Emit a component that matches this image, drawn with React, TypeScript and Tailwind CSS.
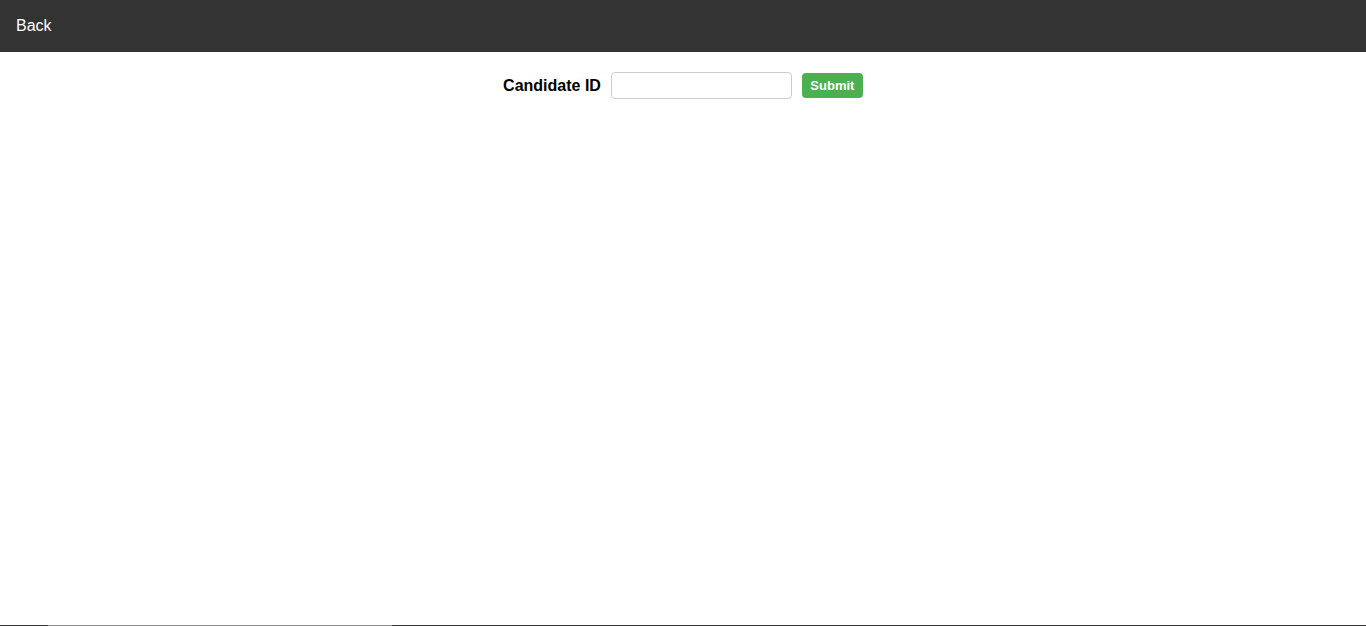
import { useState } from 'react';

const App = () => {
  const [candidateId, setCandidateId] = useState('');

  return (
    <div className="min-h-screen bg-white font-['Liberation_Sans',Arial,sans-serif]">
      {/* Top bar */}
      <header className="h-[52px] bg-[#333333] flex items-center px-4">
        <a href="#" className="text-white text-base leading-none">
          Back
        </a>
      </header>

      {/* Candidate form */}
      <form
        className="flex items-center justify-center gap-[10px] mt-5"
        onSubmit={(e) => e.preventDefault()}
      >
        <label htmlFor="candidate-id" className="text-base font-bold text-black">
          Candidate ID
        </label>
        <input
          id="candidate-id"
          type="text"
          value={candidateId}
          onChange={(e) => setCandidateId(e.target.value)}
          className="w-[181px] h-[27px] border border-[#cccccc] rounded-[4px] px-2 text-sm outline-none"
        />
        <button
          type="submit"
          className="w-[61px] h-[25px] bg-[#4caf50] text-white text-[13px] font-bold rounded-[4px]"
        >
          Submit
        </button>
      </form>

      {/* Bottom edge line */}
      <div className="fixed bottom-0 left-0 right-0 h-px flex">
        <div className="w-[48px] bg-[#333333]" />
        <div className="w-[344px] bg-[#8a8a8a]" />
        <div className="flex-1 bg-[#333333]" />
      </div>
    </div>
  );
};

export default App;
